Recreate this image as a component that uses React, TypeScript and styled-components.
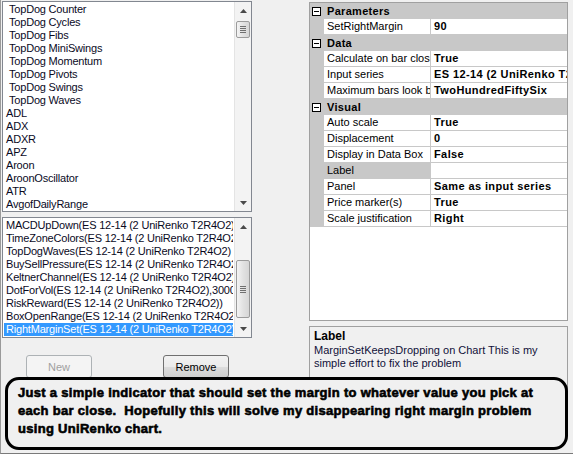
import React from "react";
import styled, { createGlobalStyle } from "styled-components";

const GlobalStyle = createGlobalStyle`
  html, body {
    margin: 0;
    padding: 0;
    background: #f0f0f0;
  }
  body {
    font-family: "Liberation Sans", Arial, sans-serif;
    font-size: 11px;
    color: #000;
  }
`;

const LINE = "#c8c8c8";

const indicators = [
  { name: "TopDog Counter", indent: true },
  { name: "TopDog Cycles", indent: true },
  { name: "TopDog Fibs", indent: true },
  { name: "TopDog MiniSwings", indent: true },
  { name: "TopDog Momentum", indent: true },
  { name: "TopDog Pivots", indent: true },
  { name: "TopDog Swings", indent: true },
  { name: "TopDog Waves", indent: true },
  { name: "ADL" },
  { name: "ADX" },
  { name: "ADXR" },
  { name: "APZ" },
  { name: "Aroon" },
  { name: "AroonOscillator" },
  { name: "ATR" },
  { name: "AvgofDailyRange" },
];

const series = "(ES 12-14 (2 UniRenko T2R4O2)";
const applied = [
  "MACDUpDown" + series,
  "TimeZoneColors" + series,
  "TopDogWaves" + series,
  "BuySellPressure" + series,
  "KeltnerChannel" + series + ",30,10)",
  "DotForVol" + series + ",3000)",
  "RiskReward" + series + ")",
  "BoxOpenRange" + series,
  "RightMarginSet" + series,
];

type Prop = { name: string; value: string; selected?: boolean };
type Category = { title: string; props: Prop[] };

const categories: Category[] = [
  { title: "Parameters", props: [{ name: "SetRightMargin", value: "90" }] },
  {
    title: "Data",
    props: [
      { name: "Calculate on bar close", value: "True" },
      { name: "Input series", value: "ES 12-14 (2 UniRenko T2R4O2)" },
      { name: "Maximum bars look back", value: "TwoHundredFiftySix" },
    ],
  },
  {
    title: "Visual",
    props: [
      { name: "Auto scale", value: "True" },
      { name: "Displacement", value: "0" },
      { name: "Display in Data Box", value: "False" },
      { name: "Label", value: "", selected: true },
      { name: "Panel", value: "Same as input series" },
      { name: "Price marker(s)", value: "True" },
      { name: "Scale justification", value: "Right" },
    ],
  },
];

const Window = styled.div`
  position: relative;
  width: 573px;
  height: 454px;
  box-sizing: border-box;
  overflow: hidden;
  background: #f0f0f0;
  border-left: 1px solid #9a9a9a;
  border-bottom: 1px solid #7a7a7a;
`;

const Body = styled.div`
  display: flex;
  gap: 57px;
  padding: 1px 0 0 1px;
`;

const LeftColumn = styled.div`
  width: 250px;
  display: flex;
  flex-direction: column;
`;

const RightColumn = styled.div`
  width: 259px;
  margin-top: 1px;
  display: flex;
  flex-direction: column;
  gap: 5px;
`;

const ListBox = styled.div<{ $height: number; $gap?: number }>`
  height: ${(p) => p.$height}px;
  margin-top: ${(p) => p.$gap ?? 0}px;
  box-sizing: border-box;
  border: 1px solid #828790;
  background: #fff;
  display: flex;
`;

const ListItems = styled.div`
  flex: 1;
  min-width: 0;
  padding: 1px 1px 0 1px;
  overflow: hidden;
`;

const ListItem = styled.div<{ $selected?: boolean; $indent?: boolean }>`
  height: 13px;
  line-height: 13px;
  white-space: nowrap;
  overflow: hidden;
  letter-spacing: -0.2px;
  padding-left: ${(p) => (p.$indent ? 5 : 2)}px;
  background: ${(p) => (p.$selected ? "#3399ff" : "transparent")};
  color: ${(p) => (p.$selected ? "#fff" : "#0a0a1e")};
`;

const ScrollBar = styled.div`
  flex: 0 0 17px;
  display: flex;
  flex-direction: column;
  background: #f3f3f3;
  border-left: 1px solid #e4e4e4;
  box-sizing: border-box;
`;

const ArrowButton = styled.div`
  height: 17px;
  flex: 0 0 17px;
  display: flex;
  align-items: center;
  justify-content: center;
`;

const Track = styled.div`
  flex: 1;
  display: flex;
  flex-direction: column;
`;

const Thumb = styled.div<{ $offset: number; $size: number }>`
  margin: ${(p) => p.$offset}px 1px 0 1px;
  height: ${(p) => p.$size}px;
  box-sizing: border-box;
  border: 1px solid #9b9b9b;
  border-radius: 2px;
  background: linear-gradient(to right, #f4f4f4, #e2e2e2 50%, #d6d6d6);
  display: flex;
  flex-direction: column;
  align-items: center;
  justify-content: center;
  gap: 1px;
`;

const Grip = styled.span`
  display: block;
  width: 6px;
  height: 1px;
  background: #6f6f6f;
`;

const Arrow = ({ down }: { down?: boolean }) => (
  <svg width="7" height="4" viewBox="0 0 7 4">
    <path d={down ? "M0 0 H7 L3.5 4 Z" : "M0 4 H7 L3.5 0 Z"} fill="#4a4a4a" />
  </svg>
);

const VScroll = ({ offset, size }: { offset: number; size: number }) => (
  <ScrollBar>
    <ArrowButton>
      <Arrow />
    </ArrowButton>
    <Track>
      <Thumb $offset={offset} $size={size}>
        <Grip />
        <Grip />
        <Grip />
        <Grip />
      </Thumb>
    </Track>
    <ArrowButton>
      <Arrow down />
    </ArrowButton>
  </ScrollBar>
);

const ButtonRow = styled.div`
  display: flex;
  gap: 71px;
  margin: 17px 0 0 24px;
`;

const Button = styled.button`
  width: 66px;
  height: 23px;
  box-sizing: border-box;
  padding: 0;
  font-family: "Liberation Sans", Arial, sans-serif;
  font-size: 11px;
  color: #000;
  border: 1px solid #707070;
  border-radius: 3px;
  background: linear-gradient(#f2f2f2, #ebebeb 50%, #dddddd 51%, #cfcfcf);

  &:disabled {
    color: #a0a0a0;
    border-color: #adb2b5;
    background: #f4f4f4;
  }
`;

const Grid = styled.div`
  height: 319px;
  box-sizing: border-box;
  border: 1px solid #a0a0a0;
  background: #fff;
  overflow: hidden;
`;

const CategoryRow = styled.div`
  height: 16px;
  display: flex;
  align-items: center;
  background: ${LINE};
  font-weight: bold;
  font-size: 11px;
  letter-spacing: 0.3px;
`;

const Expander = styled.span`
  width: 9px;
  height: 9px;
  margin: 0 6px 0 2px;
  box-sizing: border-box;
  border: 1px solid #000;
  background: #fff;
  display: flex;
  align-items: center;
  justify-content: center;

  &::after {
    content: "";
    width: 5px;
    height: 1px;
    background: #000;
  }
`;

const PropRow = styled.div`
  height: 16px;
  display: flex;
`;

const Gutter = styled.div`
  flex: 0 0 14px;
  background: ${LINE};
`;

const NameCell = styled.div<{ $selected?: boolean }>`
  flex: 0 0 107px;
  box-sizing: border-box;
  padding-left: 3px;
  line-height: 15px;
  white-space: nowrap;
  overflow: hidden;
  border-right: 1px solid ${LINE};
  border-bottom: 1px solid ${LINE};
  background: ${(p) => (p.$selected ? LINE : "#fff")};
`;

const ValueCell = styled.div`
  flex: 1;
  min-width: 0;
  box-sizing: border-box;
  padding-left: 3px;
  line-height: 15px;
  white-space: nowrap;
  overflow: hidden;
  font-weight: bold;
  letter-spacing: 0.4px;
  border-bottom: 1px solid ${LINE};
`;

const HelpPanel = styled.div`
  height: 70px;
  box-sizing: border-box;
  border: 1px solid #a0a0a0;
  padding: 2px 4px;
`;

const HelpTitle = styled.div`
  font-weight: bold;
  font-size: 12px;
  line-height: 15px;
`;

const HelpText = styled.div`
  line-height: 13px;
  color: #10103a;
`;

const Callout = styled.div`
  position: absolute;
  left: 4px;
  top: 377px;
  width: 563px;
  height: 73px;
  box-sizing: border-box;
  border: 3px solid #000;
  border-radius: 14px;
  background: #f0f0f0;
  padding: 4px 0 0 10px;
  font-family: "Liberation Sans", Arial, sans-serif;
  font-weight: bold;
  font-size: 13px;
  letter-spacing: 0.3px;
  line-height: 18px;
  white-space: pre;
  -webkit-text-stroke: 0.6px #000;
`;

export default function App() {
  return (
    <>
      <GlobalStyle />
      <Window>
        <Body>
          <LeftColumn>
            <ListBox $height={211}>
              <ListItems>
                {indicators.map((item) => (
                  <ListItem key={item.name} $indent={item.indent}>
                    {item.name}
                  </ListItem>
                ))}
              </ListItems>
              <VScroll offset={2} size={17} />
            </ListBox>

            <ListBox $height={121} $gap={5}>
              <ListItems>
                {applied.map((name, i) => (
                  <ListItem key={name} $selected={i === applied.length - 1}>
                    {name}
                  </ListItem>
                ))}
              </ListItems>
              <VScroll offset={25} size={58} />
            </ListBox>

            <ButtonRow>
              <Button disabled>New</Button>
              <Button>Remove</Button>
            </ButtonRow>
          </LeftColumn>

          <RightColumn>
            <Grid>
              {categories.map((cat) => (
                <React.Fragment key={cat.title}>
                  <CategoryRow>
                    <Expander />
                    {cat.title}
                  </CategoryRow>
                  {cat.props.map((prop) => (
                    <PropRow key={prop.name}>
                      <Gutter />
                      <NameCell $selected={prop.selected}>{prop.name}</NameCell>
                      <ValueCell>{prop.value}</ValueCell>
                    </PropRow>
                  ))}
                </React.Fragment>
              ))}
            </Grid>
            <HelpPanel>
              <HelpTitle>Label</HelpTitle>
              <HelpText>
                MarginSetKeepsDropping on Chart This is my
                <br />
                simple effort to fix the problem
              </HelpText>
            </HelpPanel>
          </RightColumn>
        </Body>

        <Callout>
          {"Just a simple indicator that should set the margin to whatever value you pick at\n" +
            "each bar close.  Hopefully this will solve my disappearing right margin problem\n" +
            "using UniRenko chart."}
        </Callout>
      </Window>
    </>
  );
}
